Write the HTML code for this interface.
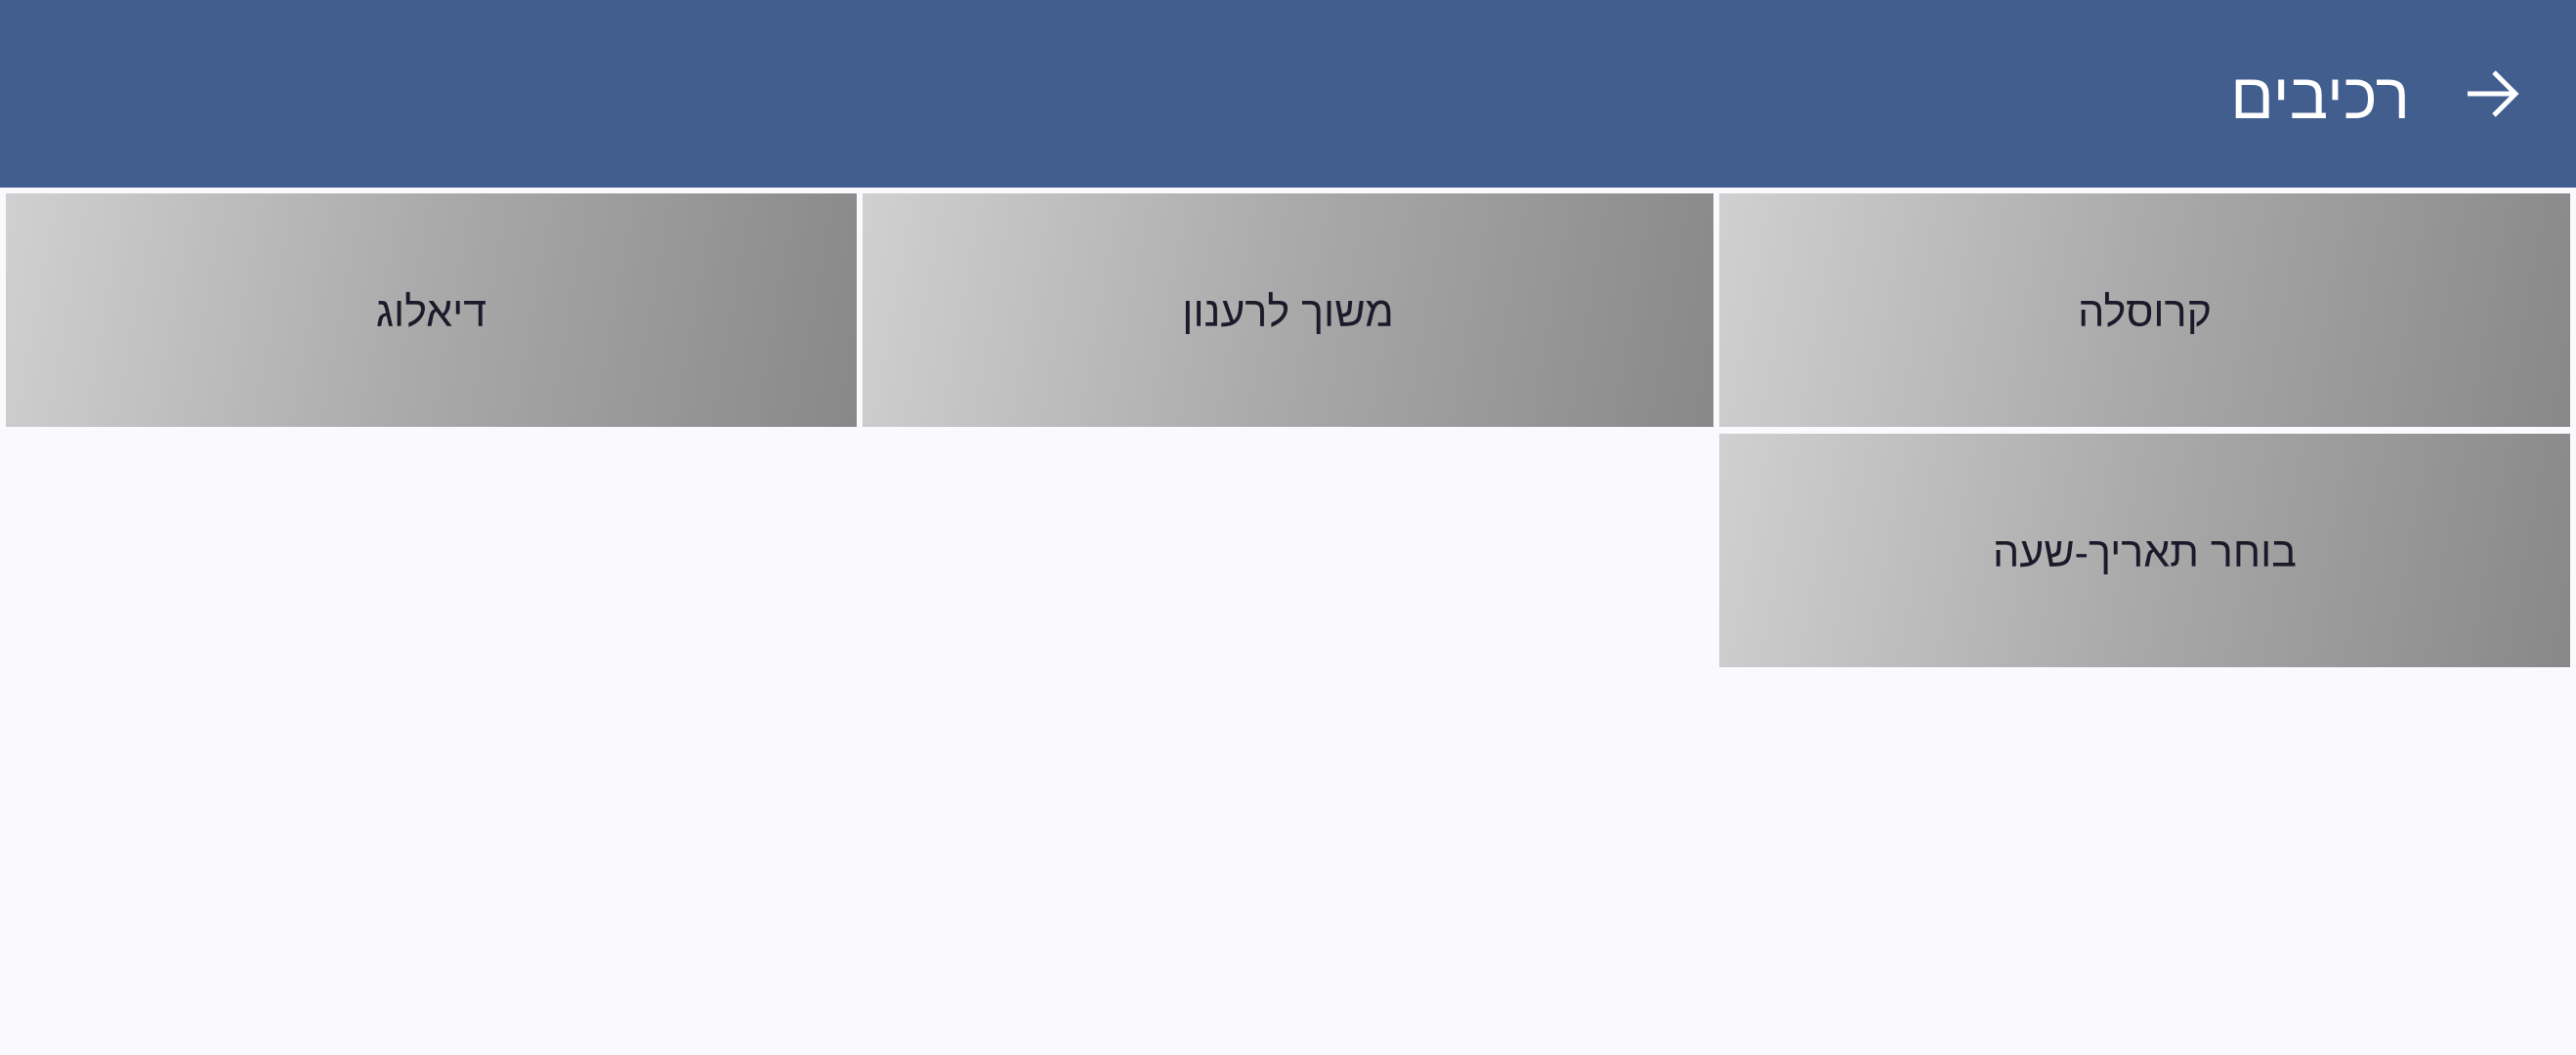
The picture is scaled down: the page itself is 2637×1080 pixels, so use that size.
<!DOCTYPE html>
<html dir="rtl"><head><meta charset="utf-8"><style>
html,body{margin:0;padding:0;width:2637px;height:1080px;background:#f9f9fe;overflow:hidden;font-family:"Liberation Sans","DejaVu Sans","Noto Sans CJK SC",sans-serif;}
.hdr{position:absolute;left:0;top:0;width:2637px;height:192px;background:#425e8f;}
.title{position:absolute;right:170px;top:53px;color:#fff;font-size:66px;line-height:90px;}
.arrow{position:absolute;left:2522px;top:66px;}
.tile{position:absolute;width:871px;height:239px;background:linear-gradient(100deg,#d0d0d0 0%,#a9a9a9 50%,#888 100%);display:flex;align-items:center;justify-content:center;color:#1a1a2a;font-size:43px;padding-top:5px;box-sizing:border-box;}
</style></head><body>
<div class="hdr">
<div class="title">רכיבים</div>
<svg class="arrow" width="60" height="60" viewBox="0 0 60 60"><path d="M4 30H52M31 8L53 30L31 52" stroke="#fff" stroke-width="5" fill="none"/></svg>
</div>
<div class="tile" style="left:1760px;top:198px">קרוסלה</div>
<div class="tile" style="left:883px;top:198px">משוך לרענון</div>
<div class="tile" style="left:6px;top:198px">דיאלוג</div>
<div class="tile" style="left:1760px;top:444px">בוחר תאריך-שעה</div>
</body></html>
